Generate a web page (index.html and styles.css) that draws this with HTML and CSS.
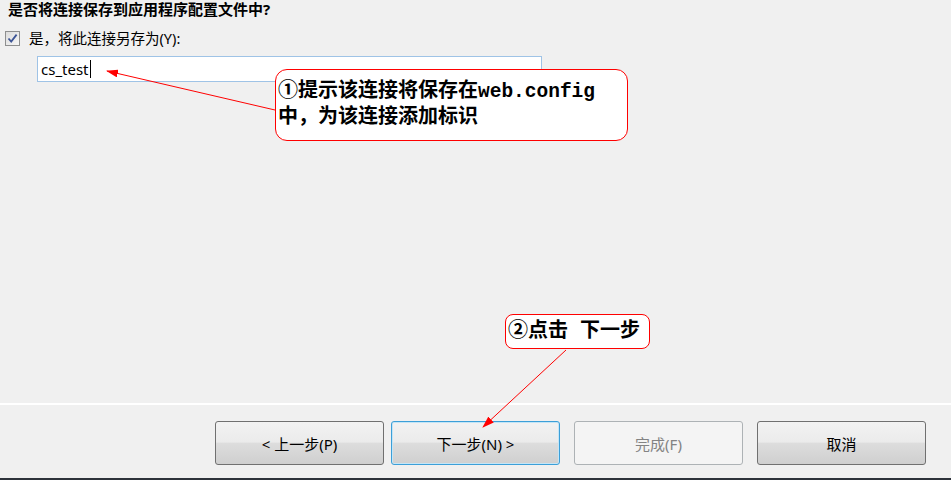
FILE: index.html
```html
<!DOCTYPE html>
<html lang="zh-CN">
<head>
    <meta charset="UTF-8">
    <title>选择数据连接</title>
    <link rel="stylesheet" href="styles.css">
</head>
<body>
    <div class="wizard">
        <div class="wizard-body">
            <h4 class="question">是否将连接保存到应用程序配置文件中?</h4>
            <label class="check-row">
                <span class="check-box">
                    <svg width="11" height="11" viewBox="0 0 11 11">
                        <path d="M1.5 5.5 L4.2 8.6 L9.6 1.6" fill="none" stroke="#3d5596" stroke-width="1.8"/>
                    </svg>
                </span>
                <span>是，将此连接另存为(Y):</span>
            </label>
            <div class="name-row">
                <div class="name-input">cs_test<span class="caret"></span></div>
            </div>
        </div>

        <div class="wizard-footer">
            <button class="btn">&lt; 上一步(P)</button>
            <button class="btn btn-focus">下一步(N) &gt;</button>
            <button class="btn btn-disabled">完成(F)</button>
            <button class="btn btn-cancel">取消</button>
        </div>

        <!-- annotations drawn on top of the dialog -->
        <svg class="arrows" width="951" height="480">
            <defs>
                <marker id="head" markerWidth="12" markerHeight="8" refX="11" refY="4" orient="auto" markerUnits="userSpaceOnUse">
                    <path d="M0 0 L12 4 L0 8 Z" fill="#ff0000"/>
                </marker>
            </defs>
            <line x1="275" y1="110" x2="107" y2="71" stroke="#ff0000" stroke-width="1" marker-end="url(#head)"/>
            <line x1="566" y1="350" x2="483" y2="427" stroke="#ff0000" stroke-width="1" marker-end="url(#head)"/>
        </svg>

        <div class="callout callout-save">
            ①提示该连接将保存在<span class="latin">web.config</span><br>中，为该连接添加标识
        </div>
        <div class="callout callout-next">②点击<span class="gap"></span>下一步</div>
    </div>
</body>
</html>
```

FILE: styles.css
```css
body {
    margin: 0;
    background-color: #f0f0f0;
    font-family: "Noto Sans", "Noto Sans CJK SC", sans-serif;
    color: #000;
}
.wizard {
    position: relative;
    width: 951px;
    height: 480px;
    display: flex;
    flex-direction: column;
    overflow: hidden;
}
.wizard-body {
    flex: 1;
}
.question {
    margin: 0;
    padding: 0 0 0 8px;
    font-size: 15px;
    line-height: 18px;
    font-weight: 700;
}
.check-row {
    display: flex;
    align-items: center;
    margin-top: 11px;
    padding-left: 5px;
    font-size: 14.5px;
    line-height: 18px;
}
.check-box {
    width: 13px;
    height: 13px;
    border: 1px solid #8e8f8f;
    background: linear-gradient(135deg, #dcdcdc, #f6f6f6);
    display: flex;
    align-items: center;
    justify-content: center;
    margin-right: 9px;
}
.name-row {
    padding: 9px 0 0 37px;
}
.name-input {
    width: 500px;
    height: 24px;
    border: 1px solid #9fc3e6;
    background-color: #fff;
    font-size: 15px;
    line-height: 24px;
    padding-left: 3px;
    display: flex;
    align-items: center;
}
.caret {
    width: 1px;
    height: 18px;
    background-color: #000;
    margin-left: 1px;
}
.wizard-footer {
    height: 57px;
    border-top: 2px solid #fff;
    border-bottom: 2px solid #2d323a;
    display: flex;
    justify-content: flex-end;
    align-items: flex-start;
    padding: 16px 25px 0 0;
}
.btn {
    width: 169px;
    height: 44px;
    border: 1px solid #707070;
    border-radius: 3px;
    background: linear-gradient(#f2f2f2 0%, #ebebeb 48%, #dddddd 50%, #cfcfcf 100%);
    font-family: "Noto Sans", "Noto Sans CJK SC", sans-serif;
    font-size: 15px;
    color: #000;
    padding: 0;
    margin-left: 14px;
}
.btn:first-child {
    margin-left: 0;
}
.btn-focus {
    margin-left: 7px;
    border-color: #3c9fd8;
    box-shadow: inset 0 0 0 1px #c4e5f6;
}
.btn-disabled {
    border-color: #adb2b5;
    background: #f4f4f4;
    color: #838383;
}
.arrows {
    position: absolute;
    left: 0;
    top: 0;
    pointer-events: none;
}
.callout {
    position: absolute;
    background-color: #fff;
    border: 1px solid #ff0000;
    border-radius: 12px;
    font-family: "Liberation Mono", "Noto Sans CJK SC", monospace;
    font-weight: 700;
    font-size: 20px;
    line-height: 25px;
    white-space: nowrap;
}
.callout-save {
    left: 275px;
    top: 69px;
    width: 353px;
    height: 72px;
    padding: 9px 0 0 2px;
    box-sizing: border-box;
}
.callout-save .latin {
    font-size: 19.5px;
}
.callout-next {
    left: 505px;
    top: 314px;
    width: 145px;
    height: 35px;
    box-sizing: border-box;
    border-radius: 8px;
    padding: 4px 0 0 2px;
}
.gap {
    display: inline-block;
    width: 12px;
}
```
